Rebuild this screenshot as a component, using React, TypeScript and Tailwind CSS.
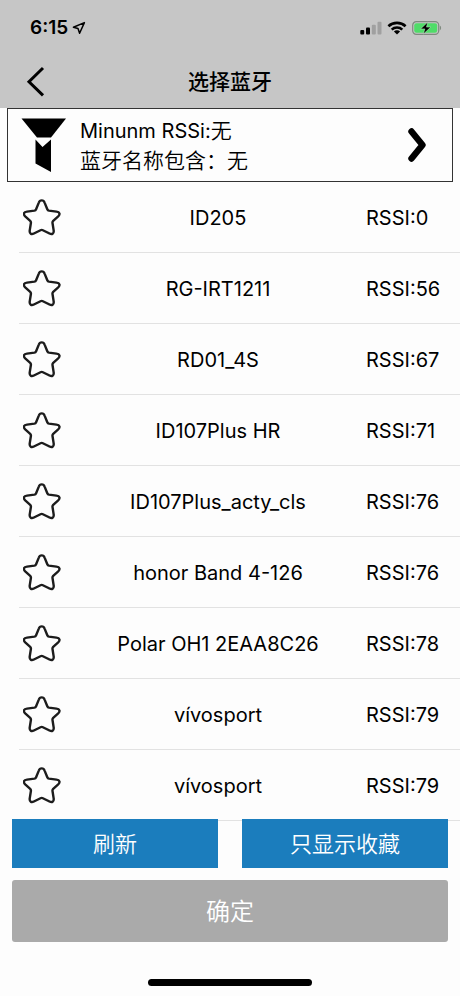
type Device = { name: string; rssi: number };

const devices: Device[] = [
  { name: "ID205", rssi: 0 },
  { name: "RG-IRT1211", rssi: 56 },
  { name: "RD01_4S", rssi: 67 },
  { name: "ID107Plus HR", rssi: 71 },
  { name: "ID107Plus_acty_cls", rssi: 76 },
  { name: "honor Band 4-126", rssi: 76 },
  { name: "Polar OH1 2EAA8C26", rssi: 78 },
  { name: "vívosport", rssi: 79 },
  { name: "vívosport", rssi: 79 },
];

function StatusBar() {
  return (
    <div className="flex h-14 items-center justify-between pr-[18px] pl-[30px]">
      <div className="flex items-center gap-1">
        <span className="text-[19px] font-semibold">6:15</span>
        <svg width="14" height="14" viewBox="0 0 14 14" fill="none" stroke="#000" strokeWidth="1.5" strokeLinejoin="round" aria-hidden="true">
          <path d="M12.4 1.6 1.4 6.2 6 7.4 7.6 12.2Z" />
        </svg>
      </div>
      <div className="flex items-center gap-[5px]">
        <svg width="22" height="14" viewBox="0 0 22 14" aria-hidden="true">
          <rect x="0.3" y="9" width="3.9" height="4.5" rx="1" />
          <rect x="6" y="6.5" width="4" height="7" rx="1" />
          <rect x="11.8" y="3.8" width="4" height="9.7" rx="1" fill="#a0a0a0" />
          <rect x="17.5" y="0.8" width="4" height="12.7" rx="1" fill="#a0a0a0" />
        </svg>
        <svg width="20" height="14" viewBox="0 0 20 14" fill="none" stroke="#000" strokeWidth="2.6" aria-hidden="true">
          <path d="M1.4 5.2C6.1 0.7 13.9 0.7 18.6 5.2" />
          <path d="M4.7 8.6C7.6 5.8 12.4 5.8 15.3 8.6" />
          <path d="M10 13.4 6.9 10.5C8.7 8.9 11.3 8.9 13.1 10.5Z" fill="#000" stroke="none" />
        </svg>
        <svg width="30" height="14" viewBox="0 0 30 14" aria-hidden="true">
          <rect x="0.7" y="0.7" width="26" height="12.6" rx="3.6" fill="none" stroke="#7f8a7f" strokeWidth="1.2" />
          <rect x="2.2" y="2.2" width="23" height="9.6" rx="2.2" fill="#4fdc68" />
          <path d="M27.8 4.6C29.6 5.4 29.6 8.6 27.8 9.4Z" fill="#7f8a7f" />
          <path d="M15.8 1 8.6 7.9H12.8L11.4 13 18.8 6.1H14.5Z" stroke="#c8f0cd" strokeWidth="0.5" />
        </svg>
      </div>
    </div>
  );
}

function Star() {
  return (
    <svg width="38" height="38" viewBox="0 0 38 38" fill="none" stroke="#1c1c1c" strokeWidth="2.4" strokeLinejoin="round" aria-hidden="true">
      <path d="M15.8 3.6C16.8 0.6 20.6 0.6 21.6 3.6L24.3 10.2Q24.8 11.4 26 11.6L33.4 12.6C36.8 13 37.4 15.2 35.2 17.3L30.2 21.8Q29.3 22.7 29.5 24L30.7 31.6C31 34.8 29 35.8 26.5 34.5L19.9 31.2Q18.7 30.6 17.5 31.2L10.9 34.5C8.4 35.8 6.4 34.8 6.7 31.6L7.9 24Q8.1 22.7 7.2 21.8L2.2 17.3C0 15.2 0.6 13 4 12.6L11.4 11.6Q12.6 11.4 13.1 10.2Z" />
    </svg>
  );
}

function DeviceRow({ name, rssi }: Device) {
  return (
    <li className="flex h-[71px] items-center border-b border-[#e2e2e2] pt-[2px]">
      <div className="w-[51px] shrink-0 pl-1">
        <button type="button" aria-label={"收藏 " + name} className="block">
          <Star />
        </button>
      </div>
      <span className="flex-1 text-center">{name}</span>
      <span className="w-[94px] shrink-0">RSSI:{rssi}</span>
    </li>
  );
}

export default function App() {
  return (
    <div className="min-h-screen bg-[#fdfdfd] font-[Inter,'Noto_Sans_CJK_SC',sans-serif] text-xl text-black">
      <header className="bg-[#c6c6c6]">
        <StatusBar />
        <div className="grid h-[52px] grid-cols-[1fr_auto_1fr] items-center px-6">
          <button type="button" aria-label="返回" className="justify-self-start">
            <svg width="22" height="32" viewBox="0 0 22 32" fill="none" stroke="#000" strokeWidth="3" aria-hidden="true">
              <path d="M19 2 5 15.7 19 29.4" />
            </svg>
          </button>
          <h1 className="text-[21px] font-medium">选择蓝牙</h1>
        </div>
      </header>

      <main>
        <button type="button" className="mx-[7px] flex h-[74px] w-[calc(100%-14px)] items-center border border-[#333] pr-6 pl-3 text-left">
          <svg width="48" height="56" viewBox="0 0 48 56" aria-hidden="true">
            <path d="M1.5 1.5H46L31 20.5H17Z" />
            <path d="M15.5 22.5 22.5 30 31 22.5V55L15.5 46.5Z" />
          </svg>
          <span className="ml-3 flex-1 pt-[2px] leading-[30px]">
            <span className="block">Minunm RSSi:<span className="text-[21px] font-[350]">无</span></span>
            <span className="block text-[21px] font-[350]">蓝牙名称包含：无</span>
          </span>
          <svg width="22" height="36" viewBox="0 0 22 36" fill="none" stroke="#000" strokeWidth="6.4" strokeLinecap="round" strokeLinejoin="round" aria-hidden="true">
            <path d="M5.5 4.5 16.5 18 5.5 31.5" />
          </svg>
        </button>
        <ul className="pl-[19px]">
          {devices.map((device, index) => (
            <DeviceRow key={index} {...device} />
          ))}
        </ul>
      </main>

      <footer className="relative -mt-[2px] px-3">
        <div className="grid grid-cols-2 gap-6 text-[22px] font-[350] text-white">
          <button type="button" className="h-[49px] bg-[#1b7dbd] pt-[2px]">刷新</button>
          <button type="button" className="h-[49px] bg-[#1b7dbd] pt-[2px]">只显示收藏</button>
        </div>
        <button type="button" className="mt-3 h-[62px] w-full rounded-[3px] bg-[#aaaaaa] pt-[2px] text-2xl font-[350] text-white">确定</button>
        <div className="mx-auto mt-[37px] h-[7px] w-[164px] rounded-full bg-black" />
      </footer>
    </div>
  );
}
